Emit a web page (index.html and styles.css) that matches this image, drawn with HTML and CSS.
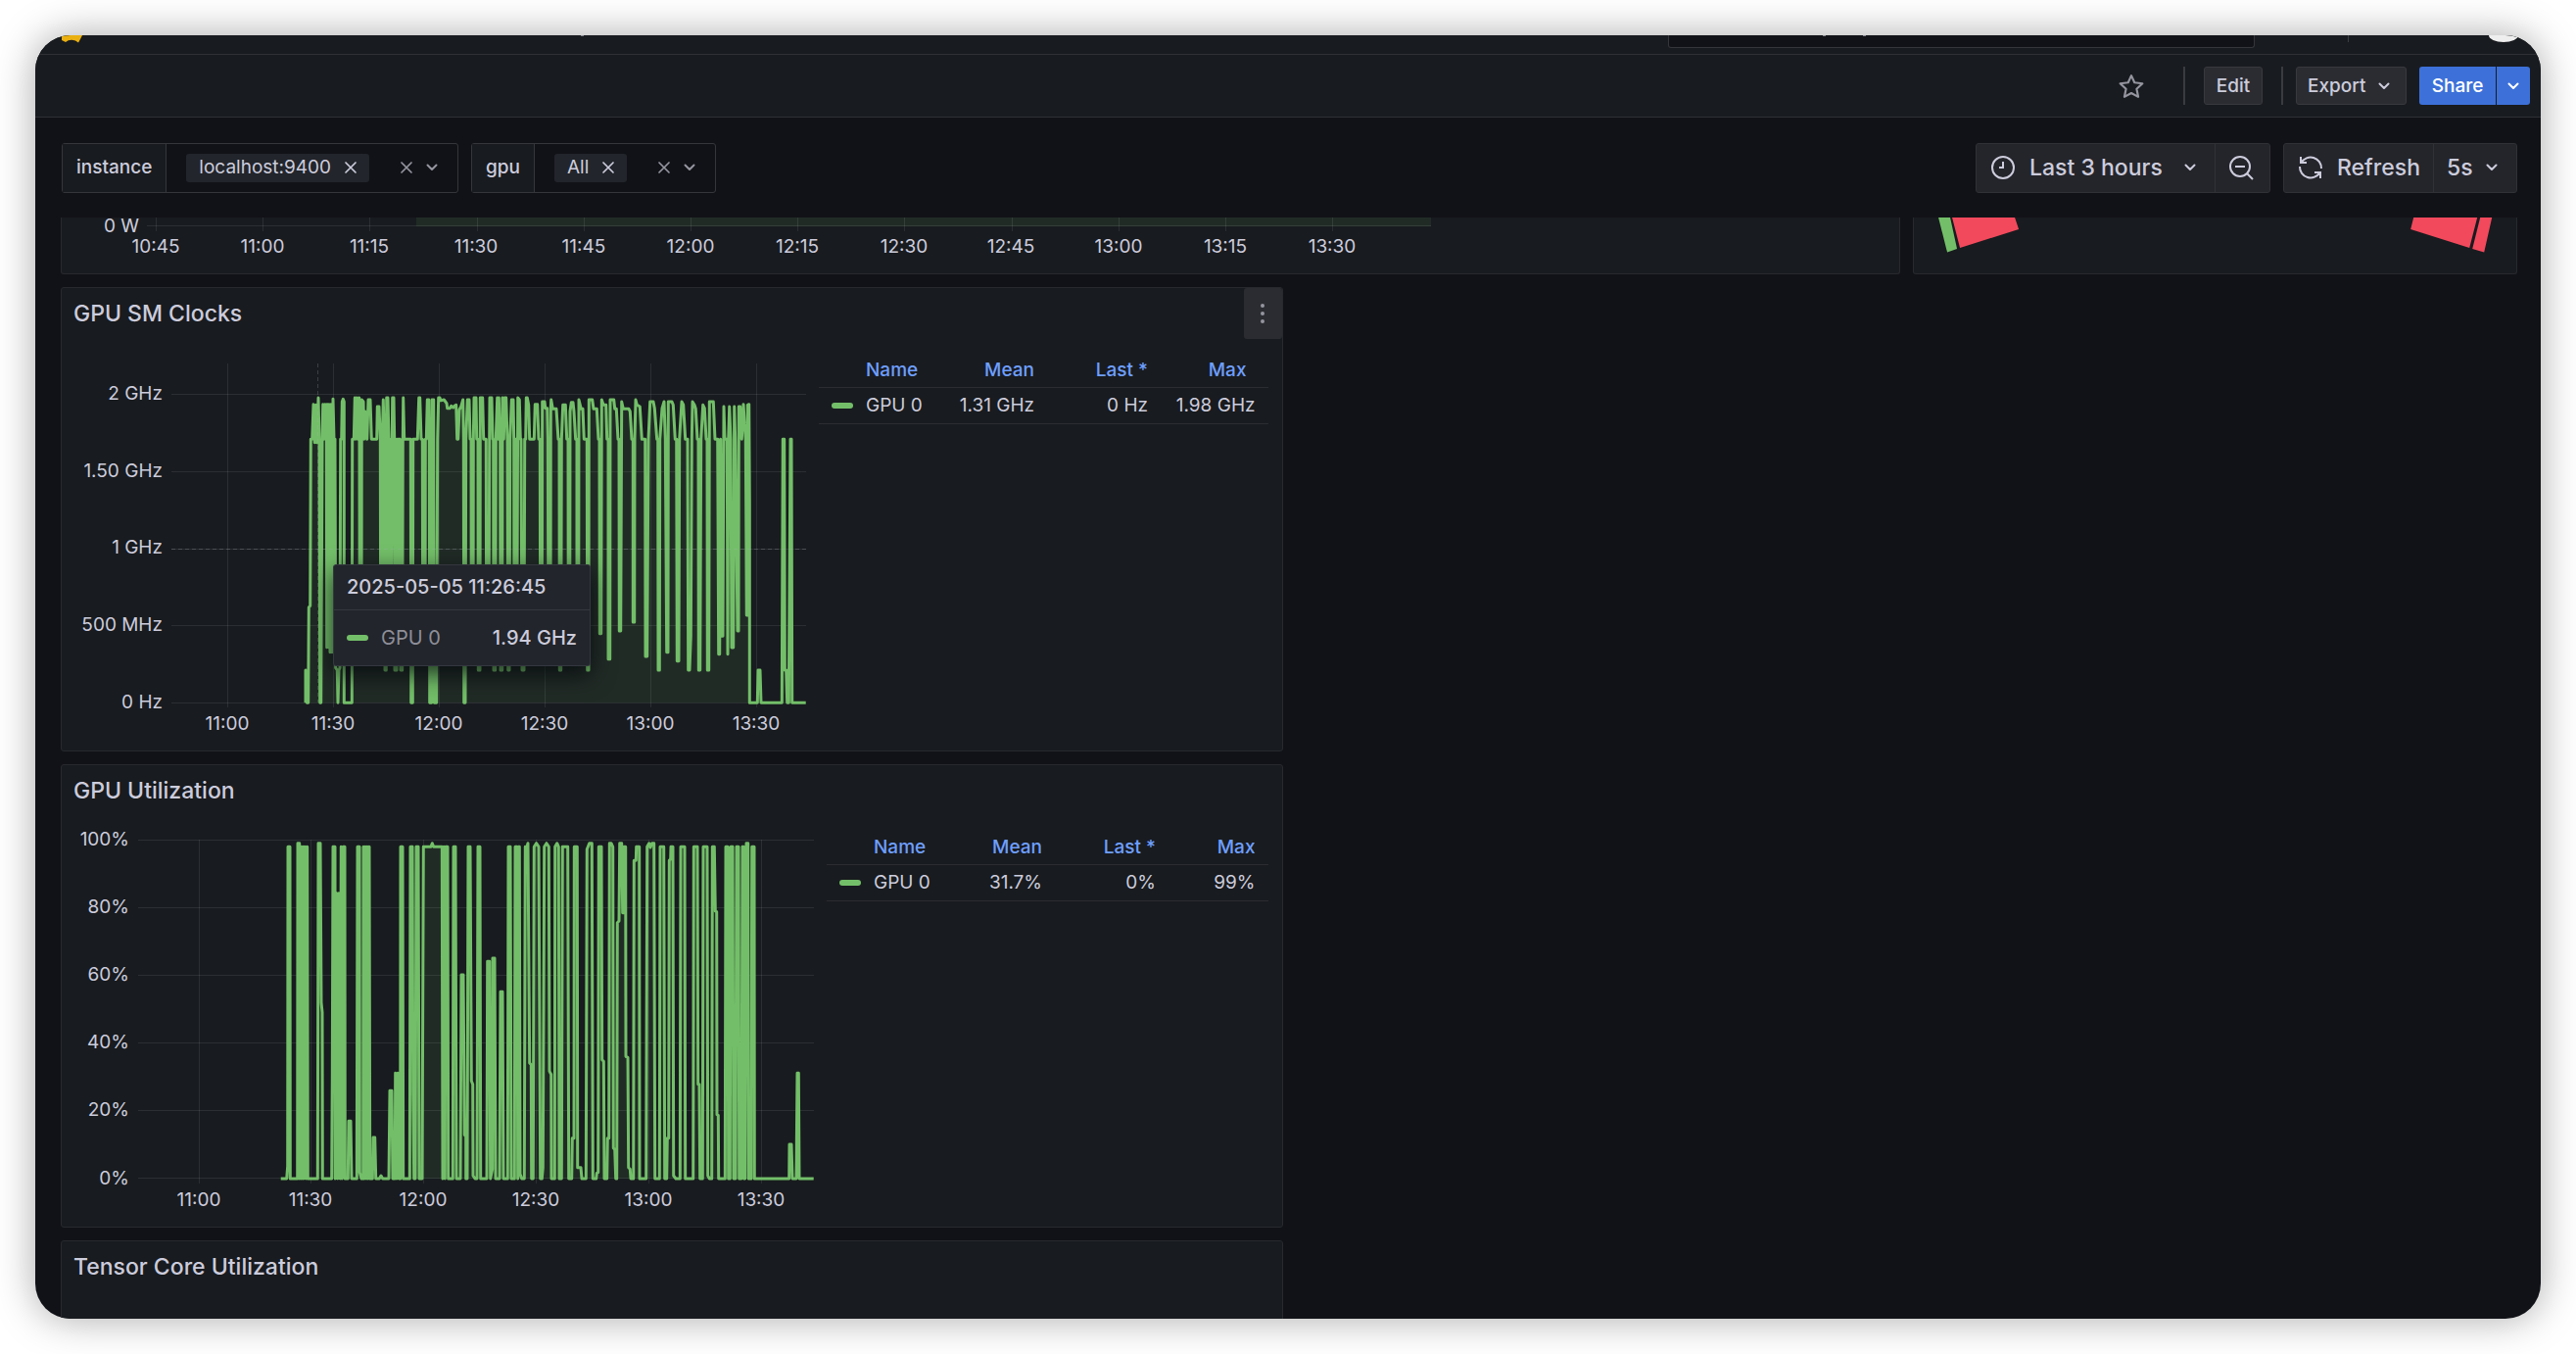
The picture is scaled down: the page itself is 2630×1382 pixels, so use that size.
FILE: index.html
```html
<!DOCTYPE html>
<html lang="en">
<head>
<meta charset="utf-8">
<title>GPU dashboard</title>
<link rel="stylesheet" href="styles.css">
</head>
<body>
<svg width="0" height="0" class="sprite" aria-hidden="true">
  <symbol id="chevron" viewBox="0 0 12 8"><path d="M1.500 1.500 6 6l4.500-4.500"/></symbol>
  <symbol id="cross" viewBox="0 0 14 14"><path d="M2 2l10 10M12 2 2 12"/></symbol>
</svg>
<div class="window">
  <div class="topnav">
    <svg class="logo" viewBox="0 0 21 8" aria-hidden="true"><path d="M0 0H21L19 4 17 7.500 14 5.500Q8 3.500 4 7L0 5Z"/></svg>
    <span class="descender crumb"></span>
    <div class="search"><span class="descender"></span><span class="descender"></span></div>
    <span class="nav-rule"></span>
    <span class="avatar"></span>
  </div>
  <header class="toolbar">
    <button class="icon-btn" aria-label="Mark as favorite"><svg class="star" viewBox="0 0 24 24"><path d="M12 2l3 6.500 7.500 1-5.500 5 1.500 7.500L12 18.500 5.500 22 7 14.500l-5.500-5L9 8.500z"/></svg></button>
    <span class="rule"></span>
    <button class="btn">Edit</button>
    <span class="rule"></span>
    <button class="btn export">Export <svg class="chev"><use href="#chevron"/></svg></button>
    <div class="share"><button>Share</button><button class="more" aria-label="Share options"><svg class="chev"><use href="#chevron"/></svg></button></div>
  </header>
  <div class="controls">
    <div class="variable">
      <label for="var-instance">instance</label>
      <div class="picker"><span class="chip">localhost:9400<button aria-label="Remove localhost:9400"><svg class="x"><use href="#cross"/></svg></button></span><input id="var-instance"><button aria-label="Clear instance"><svg class="x"><use href="#cross"/></svg></button><button aria-label="Open instance"><svg class="chev"><use href="#chevron"/></svg></button></div>
    </div>
    <div class="variable">
      <label for="var-gpu">gpu</label>
      <div class="picker"><span class="chip">All<button aria-label="Remove All"><svg class="x"><use href="#cross"/></svg></button></span><input id="var-gpu"><button aria-label="Clear gpu"><svg class="x"><use href="#cross"/></svg></button><button aria-label="Open gpu"><svg class="chev"><use href="#chevron"/></svg></button></div>
    </div>
    <div class="spacer"></div>
    <div class="group">
      <button class="range"><svg class="ico" viewBox="0 0 24 24"><circle cx="12" cy="12" r="11"/><path d="M12 6v6H8"/></svg><span>Last 3 hours</span><svg class="chev"><use href="#chevron"/></svg></button>
      <button class="zoom" aria-label="Zoom out"><svg class="ico" viewBox="0 0 24 24"><circle cx="11" cy="11" r="10"/><path d="M18 18l6 6M6 11h10"/></svg></button>
    </div>
    <div class="group">
      <button class="refresh"><svg class="ico" viewBox="0 0 24 24"><path d="M2 1v6h6M2.500 7A11 11 0 0 1 23 13M22 23v-6h-6M21.500 17A11 11 0 0 1 1 11"/></svg><span>Refresh</span></button>
      <button class="interval"><span>5s</span><svg class="chev"><use href="#chevron"/></svg></button>
    </div>
  </div>
  <main class="dashboard">
    <section class="panel cut wide">
      <svg class="plot power" width="1410" height="57">
        <rect class="area" x="362" y="0" width="1036" height="9"/>
        <g class="grid"><path d="M87 8.500H1398"/><path d="M96.500 0V14M205.500 0V14M314.500 0V14M424.500 0V14M533.500 0V14M642.500 0V14M751.500 0V14M860.500 0V14M970.500 0V14M1079.500 0V14M1188.500 0V14M1297.500 0V14"/></g>
        <g class="ylab"><text x="79" y="15">0 W</text></g>
        <g class="xlab"><text x="96" y="36">10:45</text><text x="205" y="36">11:00</text><text x="314" y="36">11:15</text><text x="423" y="36">11:30</text><text x="533" y="36">11:45</text><text x="642" y="36">12:00</text><text x="751" y="36">12:15</text><text x="860" y="36">12:30</text><text x="969" y="36">12:45</text><text x="1079" y="36">13:00</text><text x="1188" y="36">13:15</text><text x="1297" y="36">13:30</text></g>
      </svg>
    </section>
    <section class="panel cut">
      <svg class="gauge" viewBox="0 0 615 57"><path class="ok" d="M25 0H37L44 32 34 35.500Z"/><path class="bad" d="M39 0H103L107 12 47 31ZM510 0H575L567 31 507 12ZM578 0H590L582 35.500 570 32Z"/></svg>
    </section>
    <section class="panel half">
      <h2>GPU SM Clocks</h2>
      <button class="menu" aria-label="Panel menu"><svg viewBox="0 0 6 22"><circle cx="3" cy="3" r="2"/><circle cx="3" cy="11" r="2"/><circle cx="3" cy="19" r="2"/></svg></button>
      <div class="body">
        <svg class="plot" id="clocks" width="766" height="410">
          <g class="grid"><path d="M105 53.500H753M105 132.500H753M105 211.500H753M105 289.500H753M105 368.500H753"/><path d="M162.500 22V373M270.500 22V373M378.500 22V373M486.500 22V373M594.500 22V373M702.500 22V373"/></g>
          <path class="area"/><path class="line"/>
          <path class="cursor" d="M254.500 22V368M105 211.500H753"/>
          <g class="ylab"><text x="96" y="59">2 GHz</text><text x="96" y="138">1.50 GHz</text><text x="96" y="216">1 GHz</text><text x="96" y="295">500 MHz</text><text x="96" y="374">0 Hz</text></g>
          <g class="xlab"><text x="162" y="396">11:00</text><text x="270" y="396">11:30</text><text x="378" y="396">12:00</text><text x="486" y="396">12:30</text><text x="594" y="396">13:00</text><text x="702" y="396">13:30</text></g>
        </svg>
        <table class="legend">
          <thead><tr><th class="key"></th><th class="name">Name</th><th class="mean">Mean</th><th class="last">Last *</th><th class="sorted">Max</th></tr></thead>
          <tbody><tr><td class="key"><i></i></td><td class="name">GPU 0</td><td>1.31 GHz</td><td>0 Hz</td><td>1.98 GHz</td></tr></tbody>
        </table>
        <div class="tooltip"><div class="when">2025-05-05 11:26:45</div><div class="series"><i></i><span>GPU 0</span><b>1.94 GHz</b></div></div>
      </div>
    </section>
    <section class="panel half">
      <h2>GPU Utilization</h2>
      <div class="body">
        <svg class="plot" id="usage" width="774" height="410">
          <g class="grid"><path d="M71 21.500H761M71 90.500H761M71 159.500H761M71 228.500H761M71 297.500H761M71 366.500H761"/><path d="M133.500 21V372M247.500 21V372M362.500 21V372M477.500 21V372M592.500 21V372M707.500 21V372"/></g>
          <path class="area"/><path class="line"/>
          <g class="ylab"><text x="62" y="27">100%</text><text x="62" y="96">80%</text><text x="62" y="165">60%</text><text x="62" y="234">40%</text><text x="62" y="303">20%</text><text x="62" y="373">0%</text></g>
          <g class="xlab"><text x="133" y="395">11:00</text><text x="247" y="395">11:30</text><text x="362" y="395">12:00</text><text x="477" y="395">12:30</text><text x="592" y="395">13:00</text><text x="707" y="395">13:30</text></g>
        </svg>
        <table class="legend">
          <thead><tr><th class="key"></th><th class="name">Name</th><th class="mean">Mean</th><th class="last">Last *</th><th>Max</th></tr></thead>
          <tbody><tr><td class="key"><i></i></td><td class="name">GPU 0</td><td>31.7%</td><td>0%</td><td>99%</td></tr></tbody>
        </table>
      </div>
    </section>
    <section class="panel half">
      <h2>Tensor Core Utilization</h2>
      <div class="body"></div>
    </section>
  </main>
</div>
<script src="charts.js"></script>
</body>
</html>
```
FILE: charts.js
```js
// Each series is a list of segments: [x offset, "x,y x,y ..."], in thirds of a pixel.
const clocks = [
  [0, `66,1012 66,912 70,1012 74,1012 76,720 80,715 82,205 86,205 90,98 94,215 98,100 100,215 102,215 105,78 108,205
  110,1012 113,1012 117,205 119,98 122,205 125,98 128,205 130,98 131,842 134,98 136,842 138,98 141,857 144,98 147,857
  150,82 153,205 156,205 158,905 163,912 165,1012 168,912 171,905 173,205 176,205 178,90 181,82 184,90 184,1012 208,1012
  209,205 214,205 217,78 219,205 223,78 226,205 230,78 231,205 232,860 237,860 238,84 243,90 245,205 248,120 254,205
  258,84 264,84 268,205 284,205 286,105 291,105 295,205 296,880 300,880 301,205 304,84 307,205 309,912 313,912 314,78
  318,78 321,205 323,880 327,205 328,880 331,205 332,78 336,78 338,205 339,912 345,912 345,205 348,880 350,205 355,205
  357,912 362,912 364,205 365,78 368,205 388,205 389,1012 394,1012 395,205 409,205 413,78 416,78 420,205 424,205
  425,880 432,880 433,205 436,205 439,84 443,84 445,205 446,1012 452,1012 453,84 458,84 460,1012 467,1012 470,205
  473,78 477,78 480,86 490,84 498,95 500,110 508,110 512,103 518,108 522,103 527,100 530,205 533,205 537,115 542,105
  548,84 550,205 551,1012 555,1012 557,205 562,84 567,84 570,205 573,205 574,880 579,880 580,205 582,78 588,78 590,205
  594,205 595,912 600,912 601,78 608,78 611,205 619,205 620,880 627,880 629,205 630,78 636,78 639,205 641,205 642,912
  647,912 649,205 653,78 656,205 658,78 662,205 663,912 668,912 669,78 673,205 676,78 680,78 684,205 686,912 690,912
  692,205 697,84 702,84 704,205 705,880 708,880 711,205 713,880 716,78 721,84 724,205 726,205 729,912 735,912 737,205
  740,205 742,78 745,78 749,100 752,205 766,205 769,98 776,98 780,205 784,205 785,880 790,880 791,90 798,90 800,110
  806,110 808,205 810,880 816,880 817,110`],
  [780, `38,84 43,112 54,112 60,205 63,205 64,912 68,912 70,205 74,100 82,100 86,205 90,205 91,880 95,880 96,120
  100,92 105,92 108,120 113,205 117,205 117,880 122,880 123,84 127,100 130,112 135,112 139,205 148,205 149,912 153,912
  154,84 164,84 168,112 178,112 183,205 186,205 187,800 191,800 193,84 198,100 206,100 209,205 213,205 213,878 218,878
  219,84 230,84 233,112 238,112 243,205 246,205 247,792 251,792 254,90 259,112 276,112 280,120 285,205 289,205 289,765
  293,765 294,205 297,84 301,100 310,105 316,205 326,205 327,870 332,870 336,205 341,90 351,90 355,110 362,205 365,205
  366,912 370,912 371,205 378,110 384,90 388,205 392,857 396,857 397,90 408,90 412,100 418,205 422,205 424,884 429,884
  431,205 438,90 443,100 449,205 456,205 458,912 462,912 466,808 469,205 471,90 477,100 481,112 486,205 489,205 490,912
  494,912 497,205 503,100 508,110 513,205 516,205 517,912 521,912 523,90 535,90 540,205 548,205 551,863 554,863 557,205
  560,808 564,808 567,105 570,205 577,205 579,863 581,205 584,105 588,205 591,843 596,843 599,105 602,205 609,792
  612,792 613,105 617,105 622,205 627,98 634,205 637,744 640,744 640,100 644,98 646,400 646,1012 670,1012 672,912
  678,912 681,1012 745,1012 748,205 752,205 754,912 758,912 761,1012 766,1012 771,205 774,205 776,1012 818,1012`]
];
const usage = [
  [0, `50,1089 68,1089 71,1050 72,73 78,73 79,1089 101,1089 102,62 107,62 108,1089 112,73 114,1089 118,73 120,1089
  124,73 127,1089 131,73 133,1089 163,1089 165,62 171,62 174,550 177,580 178,1089 206,1089 208,775 210,73 216,73
  217,1089 221,215 224,1089 228,215 232,1089 235,73 238,1089 242,73 246,73 247,1089 256,1089 258,913 264,913 267,1089
  283,1089 285,73 291,73 292,1070 297,1089 302,1089 303,73 306,1089 309,73 312,1089 315,73 317,1089 321,73 323,1089
  331,1089 333,963 338,963 341,1089 352,1089 357,1080 362,1089 381,1089 384,820 390,820 393,1089 400,1089 401,766
  405,1089 409,766 412,1089 416,1089 417,73 423,73 425,1089 445,1089 447,73 453,73 455,820 458,1089 462,1089 465,73
  471,73 474,1089 483,1089 487,73 510,73 514,62 518,73 544,73 546,1089 550,73 553,1089 555,73 561,73 563,1089 577,1089
  579,73 585,73 588,1089 600,1089 603,465 609,465 613,955 617,960 617,1089 621,1089 624,73 630,73 634,790 638,800
  639,1080 645,1089 651,1089 654,73 660,73 662,1089 681,1089 683,424 689,424 692,1089 698,1060 699,414 705,414 708,1089
  720,1089 723,517 729,517 732,1089 745,1089 747,73 753,73 756,1089 766,1089 768,73 774,73 776,1089 778,73 781,73
  783,1075 788,1089 796,1089 799,73 804,73 807,62 812,735 817,740 818,1089 823,1089 826,73 833,62 840,73 845,1089
  850,1089 853,1055`],
  [840, `17,73 24,62 31,73 33,760 38,770 39,1089 49,1089 50,73 56,62 61,73 63,1089 70,1089 73,73 89,73 92,1089
  101,1089 103,965 108,965 109,73 118,73 119,1055 129,1055 132,1089 145,1089 148,80 155,62 163,62 166,1089 176,1089
  178,1072 182,1070 184,73 192,73 194,725 199,730 201,1089 209,1089 211,965 215,965 217,62 222,62 227,73 229,995
  233,1000 236,1089 239,1089 241,305 246,300 248,62 254,62 257,275 261,275 262,73 266,73 267,715 273,718 275,1055
  280,1060 282,1089 290,1089 292,115 298,115 299,73 308,73 309,1089 329,1089 332,73 338,62 342,75 347,62 353,62
  356,1089 370,1089 372,73 383,73 386,1089 392,1089 394,965 398,965 400,115 404,110 405,73 411,73 413,1080 420,1089
  433,1089 435,73 447,73 449,1089 473,1089 475,73 486,73 488,800 492,800 494,1089 502,1089 504,73 516,73 518,1080
  523,1089 530,1089 532,73 538,73 541,270 545,272 546,893 550,895 551,1089 571,1089 573,73 579,73 581,1089 586,1089
  588,73 594,73 597,1089 603,1089 606,73 612,73 614,1089 621,1089 624,73 628,73 629,1089 632,1089 636,62 641,62
  643,1089 651,1089 653,73 660,73 661,1089 767,1089 768,984 774,984 777,1089 789,1089 792,766 796,766 798,1089 842,1089`]
];

function draw(id, series, left, top) {
  const points = series.flatMap(([offset, text]) => text.trim().split(/\s+/).map(pair => {
    const [x, y] = pair.split(",").map(Number);
    return ((x + offset) / 3 + left).toFixed(1) + " " + (y / 3 + top).toFixed(1);
  }));
  const d = "M" + points.join("L");
  const svg = document.getElementById(id);
  svg.querySelector(".line").setAttribute("d", d);
  svg.querySelector(".area").setAttribute("d", d + "Z");
}

draw("clocks", clocks, 220, 31);
draw("usage", usage, 200, 4);
```
FILE: styles.css
```css
* { box-sizing: border-box; }
body {
  margin: 0;
  padding: 36px;
  height: 100vh;
  background: #fff;
  color: #ccccdc;
  font: 400 19px/24px Inter, "Liberation Sans", sans-serif;
}
button, input {
  margin: 0;
  padding: 0;
  border: 0;
  background: none;
  color: inherit;
  font: inherit;
}
svg { display: block; flex: none; }
.sprite { position: absolute; }
.window {
  height: 100%;
  display: flex;
  flex-direction: column;
  overflow: hidden;
  border-radius: 36px;
  background: #111217;
  box-shadow: 0 0 40px rgba(0, 0, 0, .34);
}

.topnav {
  flex: none;
  height: 20px;
  display: flex;
  align-items: flex-start;
  padding: 0 23px 0 27px;
  border-bottom: 1px solid #2e3035;
  background: #181b1f;
}
.logo { width: 21px; height: 8px; fill: #eab010; }
.descender { width: 3px; height: 1px; background: #85868f; }
.crumb { margin-left: 509px; }
.search {
  width: 599px;
  height: 13px;
  margin-left: auto;
  display: flex;
  gap: 38px;
  padding-left: 157px;
  border: 1px solid #34363c;
  border-top: 0;
  border-radius: 0 0 3px 3px;
  background: #111217;
}
.nav-rule { width: 1px; height: 7px; margin: 0 143px 0 95px; background: #3c3e44; }
.avatar { width: 30px; height: 7px; border-radius: 0 0 15px 15px / 0 0 7px 7px; background: #eee; }

.toolbar {
  flex: none;
  height: 64px;
  display: flex;
  align-items: center;
  justify-content: flex-end;
  padding: 0 11px;
  border-bottom: 1px solid #2e3035;
  background: #181b1f;
  font-weight: 500;
}
.toolbar .rule { width: 2px; height: 39px; background: #3a3b41; }
.toolbar button { height: 39px; }
.icon-btn { width: 40px; margin-right: 33px; display: flex; align-items: center; justify-content: center; }
.star { width: 26px; height: 26px; fill: none; stroke: #94959f; stroke-width: 2; stroke-linejoin: round; }
.btn {
  width: 60px;
  margin: 0 19px;
  border: 1px solid #38393f;
  border-radius: 3px;
  background: #2b2c32;
}
.export { width: 113px; margin: 0 13px; display: flex; align-items: center; justify-content: space-between; padding: 0 16px 0 11px; }
.share { display: flex; gap: 1px; color: #fff; }
.share button { width: 78px; border-radius: 3px 0 0 3px; background: #3d71d9; }
.share .more { width: 34px; display: flex; align-items: center; justify-content: center; border-radius: 0 3px 3px 0; }
.chev { width: 12px; height: 8px; fill: none; stroke: currentColor; stroke-width: 2; stroke-linecap: round; stroke-linejoin: round; }
.x { width: 14px; height: 14px; fill: none; stroke: currentColor; stroke-width: 1.7; stroke-linecap: round; }

.controls {
  flex: none;
  height: 102px;
  display: flex;
  align-items: center;
  gap: 13px;
  padding: 0 24px 0 27px;
}
.variable { height: 51px; display: flex; border: 1px solid #34363c; border-radius: 3px; }
.variable label {
  display: flex;
  align-items: center;
  padding: 0 14px;
  border-right: 1px solid #34363c;
  background: #181b1f;
  font-weight: 500;
}
.picker { display: flex; align-items: center; padding: 0 20px; color: #94959f; }
.picker input { width: 31px; }
.picker > button + button { margin-left: 13px; }
.chip {
  height: 29px;
  display: flex;
  align-items: center;
  gap: 13px;
  padding: 0 12px 0 13px;
  border-radius: 3px;
  background: #22252b;
  color: #ccccdc;
}
.spacer { flex: 1; }
.group {
  height: 51px;
  display: flex;
  border: 1px solid #2f3137;
  border-radius: 3px;
  background: #24252b;
  font-size: 23px;
  font-weight: 500;
}
.group button { display: flex; align-items: center; gap: 15px; padding: 0 15px; }
.group button + button { border-left: 1px solid #2f3137; }
.group .chev { margin-left: auto; }
.ico { width: 24px; height: 24px; overflow: visible; fill: none; stroke: currentColor; stroke-width: 2; }
.group .range { width: 243px; padding-right: 19px; }
.group .zoom { width: 56px; padding: 0 14px; }
.group .refresh { width: 152px; padding-right: 0; }
.group .interval { width: 85px; gap: 0; padding: 0 19px 0 13px; }

.dashboard {
  flex: 1;
  min-height: 0;
  display: grid;
  grid-template-columns: repeat(4, 1fr);
  grid-template-rows: 58px 474px 473px 473px;
  gap: 13px;
  padding: 0 24px 0 26px;
  overflow: hidden;
}
.panel {
  position: relative;
  min-width: 0;
  border: 1px solid #27292e;
  border-radius: 3px;
  background: #181b1f;
}
.cut { border-top: 0; border-radius: 0 0 3px 3px; }
.wide { grid-column: span 3; }
.half { grid-column: 1 / span 2; }
.panel h2 { height: 55px; margin: 0; padding: 0 12px; font-size: 23px; font-weight: 500; line-height: 52px; }
.menu {
  position: absolute;
  top: 0;
  right: 0;
  width: 39px;
  height: 52px;
  display: flex;
  align-items: center;
  justify-content: center;
  border-radius: 3px;
  background: #2a2c31;
}
.menu svg { width: 6px; height: 22px; fill: #94959f; }
.body { position: relative; display: flex; padding: 0 14px 0 7px; }
.gauge { width: 100%; }
.ok { fill: #73bf69; }
.bad { fill: #f2495c; }
.plot text { fill: #ccccdc; font-size: 19px; }
.grid path { fill: none; stroke: rgba(240, 250, 255, .09); stroke-width: 1; }
.ylab { text-anchor: end; }
.xlab { text-anchor: middle; }
.area { fill: rgba(115, 191, 105, .1); }
.line { fill: none; stroke: #73bf69; stroke-width: 3; stroke-linejoin: round; }
.cursor { fill: none; stroke: rgba(170, 172, 185, .25); stroke-width: 1; stroke-dasharray: 4 3; }

.legend { width: 100%; min-width: 0; align-self: flex-start; margin-top: 9px; border-collapse: collapse; table-layout: fixed; }
.legend th, .legend td { height: 37px; padding: 1px 0 0; border-bottom: 1px solid #2a2c31; text-align: right; font-weight: 400; white-space: nowrap; }
.legend th { padding-top: 3px; color: #6e9fff; font-weight: 500; }
.legend th:last-child, .legend td:last-child { padding-right: 13px; }
.legend th.sorted { padding-right: 22px; }
.legend .key { width: 48px; padding-left: 13px; text-align: left; }
.legend .name { width: 80px; text-align: left; }
.legend .mean { width: 92px; }
.legend .last { width: 116px; }
.key i, .series i { display: block; width: 22px; height: 6px; border-radius: 3px; background: #73bf69; }

.tooltip {
  position: absolute;
  left: 277px;
  top: 227px;
  width: 263px;
  border: 1px solid #34373f;
  border-radius: 3px;
  background: #22252b;
  box-shadow: 0 8px 24px rgba(1, 4, 9, .75);
  font-size: 20px;
}
.when { height: 46px; padding: 0 13px; border-bottom: 1px solid #34373f; font-weight: 500; line-height: 44px; }
.series { height: 56px; display: flex; align-items: center; gap: 13px; padding: 0 13px; }
.series span { flex: 1; color: #8e8f99; }
.series b { font-weight: 500; }
```
